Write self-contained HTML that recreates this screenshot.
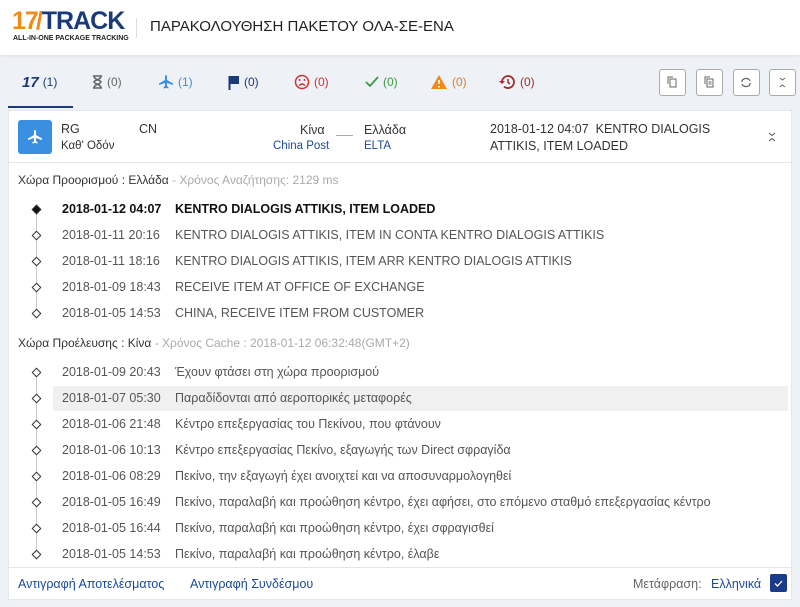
<!DOCTYPE html>
<html><head><meta charset="utf-8"><style>
*{margin:0;padding:0;box-sizing:border-box}
body{width:800px;height:607px;background:#eef1f6;font-family:"Liberation Sans","Noto Sans CJK SC",sans-serif;position:relative;overflow:hidden;color:#333}
.hdr{position:absolute;left:0;top:0;width:800px;height:55px;background:#fff;box-shadow:0 1px 3px rgba(0,0,0,.08)}
.logo{position:absolute;left:12px;top:9px;font-weight:900;font-size:25px;letter-spacing:-1px;color:#1a3a7a;line-height:25px}
.logo b{color:#f08a1c}
.sub{position:absolute;left:13px;top:35px;font-size:7px;font-weight:bold;color:#222;letter-spacing:0}
.vsep{position:absolute;left:136px;top:18px;width:1px;height:20px;background:#ddd}
.title{position:absolute;left:150px;top:18px;font-size:15px;color:#222}
.tab{position:absolute;top:72px;height:20px;font-size:12px;display:flex;align-items:center;gap:4px}
.ul{position:absolute;left:8px;top:106px;width:65px;height:2px;background:#1a3a7a}
.btn{position:absolute;top:69px;width:27px;height:27px;border:1px solid #aaa;border-radius:3px;background:#fff}
.card{position:absolute;left:8px;top:110px;width:784px;height:490px;background:#fff;border:1px solid #e3e6ea}
.t{position:absolute;font-size:12.5px;white-space:nowrap}
.dia{position:absolute;left:32px;width:7px;height:7px;border:1px solid #333;transform:rotate(45deg);background:#fff}
.line{position:absolute;left:35px;width:1px;background:#ccc}
</style></head><body>
<div class="hdr">
<div class="logo"><b>17</b><b style="margin-left:-2px">/</b>TRACK</div>
<div class="sub">ALL-IN-ONE PACKAGE TRACKING</div>
<div class="vsep"></div>
<div class="title">ΠΑΡΑΚΟΛΟΥΘΗΣΗ ΠΑΚΕΤΟΥ ΟΛΑ-ΣΕ-ΕΝΑ</div>
</div>
<div class="tab" style="left:22px;color:#1a3a7a"><span style="font-weight:900;font-size:15px;font-style:italic">17</span><span>(1)</span></div>
<div class="tab" style="left:92px;color:#666"><svg width="11" height="14" viewBox="0 0 11 14"><path d="M1 1h9M1 13h9M2 1c0 4 7 4 7 6s-7 2-7 6M9 1c0 4-7 4-7 6s7 2 7 6" stroke="#666" fill="none" stroke-width="1.5"/></svg><span>(0)</span></div>
<div class="tab" style="left:158px;color:#3a8fe0"><svg width="16" height="16" viewBox="0 0 16 16"><path d="M8 1c.8 0 1 1 1 2v3l6 3.5V11L9 9v3l1.5 1.2V14.5L8 14l-2.5.5v-1.3L7 12V9L1 11V9.5L7 6V3c0-1 .2-2 1-2z" fill="#3a8fe0"/></svg><span>(1)</span></div>
<div class="tab" style="left:228px;color:#1a3a7a"><svg width="12" height="15"><path d="M1.5 1v14" stroke="#1a3a7a" stroke-width="2"/><path d="M1 1h10v8H1z" fill="#1a3a7a"/></svg><span>(0)</span></div>
<div class="tab" style="left:294px;color:#d32f2f"><svg width="16" height="16"><circle cx="8" cy="8" r="6.5" fill="none" stroke="#d32f2f" stroke-width="1.5"/><circle cx="5.5" cy="6" r="1" fill="#d32f2f"/><circle cx="10.5" cy="6" r="1" fill="#d32f2f"/><path d="M5 11.5q3-3 6 0" fill="none" stroke="#d32f2f" stroke-width="1.3"/></svg><span>(0)</span></div>
<div class="tab" style="left:365px;color:#3f9a3f"><svg width="14" height="12"><path d="M1 6l4 4 8-9" fill="none" stroke="#3f9a3f" stroke-width="1.8"/></svg><span>(0)</span></div>
<div class="tab" style="left:430px;color:#e67e22"><svg width="18" height="16"><path d="M9 1L17 15H1z" fill="#f08a1c"/><path d="M9 6v4M9 12v1.5" stroke="#fff" stroke-width="1.6"/></svg><span>(0)</span></div>
<div class="tab" style="left:498px;color:#a52a2a"><svg width="18" height="16"><path d="M4 8a6 6 0 1 1 2 4.5" fill="none" stroke="#a52a2a" stroke-width="1.8"/><path d="M1 7l3 3 3-3" fill="#a52a2a"/><path d="M10 5v3.5l2 1.5" stroke="#a52a2a" stroke-width="1.5" fill="none"/></svg><span>(0)</span></div>
<div class="ul"></div>
<div class="btn" style="left:659px"><svg width="25" height="25"><rect x="10" y="9" width="6" height="8" fill="none" stroke="#666"/><path d="M8 14V7h5" fill="none" stroke="#666"/></svg></div>
<div class="btn" style="left:696px"><svg width="25" height="25"><rect x="10" y="9" width="6" height="8" fill="none" stroke="#666"/><path d="M8 14V7h5M11.5 12h3M11.5 14h3" fill="none" stroke="#666"/></svg></div>
<div class="btn" style="left:733px"><svg width="25" height="25"><path d="M8 12a4 3 0 0 1 8-1M16 13a4 3 0 0 1-8 1" fill="none" stroke="#666" stroke-width="1.3"/></svg></div>
<div class="btn" style="left:769px"><svg width="25" height="25"><path d="M10 8l2.5 2 2.5-2M10 17l2.5-2 2.5 2" fill="none" stroke="#666"/></svg></div>
<div class="card">
<div style="position:absolute;left:9px;top:9px;width:34px;height:34px;background:#3a8fe0;border-radius:3px"><svg width="34" height="34" viewBox="-9 -9 34 34"><path d="M8 1c.8 0 1 1 1 2v3l6 3.5V11L9 9v3l1.5 1.2V14.5L8 14l-2.5.5v-1.3L7 12V9L1 11V9.5L7 6V3c0-1 .2-2 1-2z" fill="#fff"/></svg></div>
<div class="t" style="left:52px;top:11px">RG</div>
<div class="t" style="left:52px;top:29px;font-size:11.5px">Καθ' Οδόν</div>
<div class="t" style="left:130px;top:11px">CN</div>
<div class="t" style="left:291px;top:12px">Κίνα</div>
<div class="t" style="left:264px;top:29px;color:#1a4a9a;font-size:11.5px">China Post</div>
<div style="position:absolute;left:327px;top:24px;width:17px;height:1px;background:#aaa"></div>
<div class="t" style="left:355px;top:12px">Ελλάδα</div>
<div class="t" style="left:355px;top:29px;color:#1a4a9a;font-size:11.5px">ELTA</div>
<div class="t" style="left:481px;top:10px;line-height:17px;white-space:normal;width:270px">2018-01-12 04:07&nbsp; KENTRO DIALOGIS ATTIKIS, ITEM LOADED</div>
<svg style="position:absolute;left:758px;top:20px" width="10" height="12"><path d="M2 2l3 2.5 3-2.5M2 10l3-2.5 3 2.5" fill="none" stroke="#555"/></svg>
<div style="position:absolute;left:0;top:51px;width:782px;height:1px;background:#e6e6e6"></div>
<div class="t" style="left:9px;top:62px;font-size:12px">Χώρα Προορισμού : Ελλάδα<span style="color:#aaa"> - Χρόνος Αναζήτησης: 2129 ms</span></div>
<div class="t" style="left:9px;top:225px;font-size:12px">Χώρα Προέλευσης : Κίνα<span style="color:#aaa"> - Χρόνος Cache : 2018-01-12 06:32:48(GMT+2)</span></div>
<div style="position:absolute;left:44px;top:275px;width:735px;height:25px;background:#f0f0f0"></div>
<div class="line" style="top:98px;height:104px;left:27px"></div>
<div class="line" style="top:262px;height:182px;left:27px"></div>
<div id="rows"></div>
<div style="position:absolute;left:0;top:456px;width:782px;height:1px;background:#e6e6e6"></div>
<div class="t" style="left:9px;top:466px;color:#1a4a9a;font-size:12.5px">Αντιγραφή Αποτελέσματος</div>
<div class="t" style="left:181px;top:466px;color:#1a4a9a;font-size:12.5px">Αντιγραφή Συνδέσμου</div>
<div class="t" style="left:624px;top:466px;color:#666;font-size:12.5px">Μετάφραση:</div>
<div class="t" style="left:702px;top:466px;color:#1a4a9a;font-size:12.5px">Ελληνικά</div>
<div style="position:absolute;left:761px;top:463px;width:17px;height:18px;background:#1a3a8a;border-radius:2px"><svg width="17" height="18"><path d="M5 9.5l2.5 2.5 4.5-5" fill="none" stroke="#fff" stroke-width="1.3"/></svg></div>
</div>
<script>
var r=[[92,1,"2018-01-12 04:07","KENTRO DIALOGIS ATTIKIS, ITEM LOADED"],[118,0,"2018-01-11 20:16","KENTRO DIALOGIS ATTIKIS, ITEM IN CONTA KENTRO DIALOGIS ATTIKIS"],[144,0,"2018-01-11 18:16","KENTRO DIALOGIS ATTIKIS, ITEM ARR KENTRO DIALOGIS ATTIKIS"],[170,0,"2018-01-09 18:43","RECEIVE ITEM AT OFFICE OF EXCHANGE"],[196,0,"2018-01-05 14:53","CHINA, RECEIVE ITEM FROM CUSTOMER"],[255,0,"2018-01-09 20:43","Έχουν φτάσει στη χώρα προορισμού"],[281,0,"2018-01-07 05:30","Παραδίδονται από αεροπορικές μεταφορές"],[307,0,"2018-01-06 21:48","Κέντρο επεξεργασίας του Πεκίνου, που φτάνουν"],[333,0,"2018-01-06 10:13","Κέντρο επεξεργασίας Πεκίνο, εξαγωγής των Direct σφραγίδα"],[359,0,"2018-01-06 08:29","Πεκίνο, την εξαγωγή έχει ανοιχτεί και να αποσυναρμολογηθεί"],[385,0,"2018-01-05 16:49","Πεκίνο, παραλαβή και προώθηση κέντρο, έχει αφήσει, στο επόμενο σταθμό επεξεργασίας κέντρο"],[411,0,"2018-01-05 16:44","Πεκίνο, παραλαβή και προώθηση κέντρο, έχει σφραγισθεί"],[437,0,"2018-01-05 14:53","Πεκίνο, παραλαβή και προώθηση κέντρο, έλαβε"]];
var h="";r.forEach(function(x){var c=x[1]?"color:#111;font-weight:bold":"color:#555";
h+='<div class="dia" style="left:24px;top:'+(x[0]+3)+'px;'+(x[1]?'background:#111':'')+'"></div>';
h+='<div class="t" style="left:53px;top:'+(x[0]-1)+'px;'+c+'">'+x[2]+'</div>';
h+='<div class="t" style="left:166px;top:'+(x[0]-1)+'px;'+c+'">'+x[3]+'</div>';});
document.getElementById("rows").innerHTML=h;
</script>
</body></html>
